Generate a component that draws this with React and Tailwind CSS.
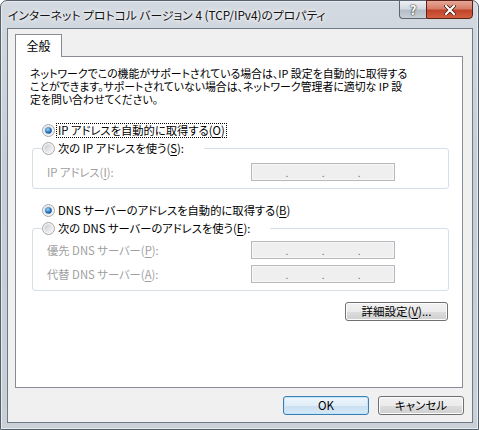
import React from "react";

const FONT = "font-['Noto_Sans_CJK_JP','Noto_Sans',sans-serif] [font-feature-settings:'palt']";

function Radio({ checked, id }) {
  return (
    <svg width="13" height="13" viewBox="0 0 13 13" className="shrink-0">
      <defs>
        <linearGradient id={`rf-${id}`} x1="0" y1="0" x2="1" y2="1">
          <stop offset="0" stopColor="#c9cdd1" />
          <stop offset="1" stopColor="#f7f7f7" />
        </linearGradient>
        <radialGradient id={`rd-${id}`} cx="0.4" cy="0.35" r="0.75">
          <stop offset="0" stopColor="#a6dcfb" />
          <stop offset="0.55" stopColor="#2a77c6" />
          <stop offset="1" stopColor="#15467f" />
        </radialGradient>
      </defs>
      <circle cx="6.5" cy="6.5" r="6" fill="#f3f3f3" stroke="#a4a8ac" />
      <circle cx="6.5" cy="6.5" r="4.2" fill={`url(#rf-${id})`} />
      {checked && <circle cx="6.5" cy="6.5" r="3.3" fill={`url(#rd-${id})`} />}
    </svg>
  );
}

function Key({ children }) {
  return <span className="underline underline-offset-[2px]">{children}</span>;
}

function RadioRow({ id, checked, focus, children }) {
  return (
    <div className="flex h-[16px] items-center">
      <Radio id={id} checked={checked} />
      <span
        className={
          "ml-[1px] px-[1px] leading-[13px] border whitespace-nowrap " +
          (focus ? "border-dotted border-black" : "border-transparent")
        }
      >
        {children}
      </span>
    </div>
  );
}

function IpField() {
  return (
    <div className="flex h-[18px] w-[144px] items-end border border-[#b5b9bd] bg-[#efefef] pb-[3px] text-[10px] leading-[8px] text-[#6d6d6d] shadow-[inset_0_0_0_1px_#f7f7f7]">
      <span className="flex-1" />
      <span>.</span>
      <span className="flex-1" />
      <span>.</span>
      <span className="flex-1" />
      <span>.</span>
      <span className="flex-1" />
    </div>
  );
}

function FieldRow({ label, className = "" }) {
  return (
    <div className={"flex items-center pl-[5px] " + className}>
      <span className="w-[204px] whitespace-nowrap text-[#a0a0a0]">{label}</span>
      <IpField />
    </div>
  );
}

function Button({ children, primary, className = "" }) {
  return (
    <button
      className={
        "flex h-[19px] items-center justify-center rounded-[3px] border text-[11.5px] leading-none text-black " +
        (primary
          ? "border-[#3c7fb1] bg-[linear-gradient(180deg,#eef6fc_0%,#e0eef8_50%,#c9e0f1_51%,#d6e8f5_100%)] shadow-[inset_0_0_0_1px_#bfe4fb] "
          : "border-[#707070] bg-[linear-gradient(180deg,#f2f2f2_0%,#ebebeb_50%,#dddddd_51%,#cfcfcf_100%)] shadow-[inset_0_0_0_1px_#fcfcfc] ") +
        className
      }
    >
      {children}
    </button>
  );
}

export default function App() {
  return (
    <div className={"w-[479px] h-[430px] bg-white " + FONT}>
      <div className="flex h-[430px] w-[479px] flex-col rounded-t-[7px] border border-[#57616c] bg-[linear-gradient(180deg,#d3d9e0_0%,#c5cdd6_40%,#c9d0d8_100%)] pb-[6px] pl-[6px] pr-[5px] shadow-[inset_0_0_0_1px_#e6ebf0]">
        {/* TITLE BAR */}
        <div className="flex h-[27px] shrink-0 items-start">
          <div className="self-center pl-[1px] text-[11.8px] leading-[14px] text-[#111] whitespace-nowrap [text-shadow:0_0_6px_#fff,0_0_3px_#fff]">
            インターネット プロトコル バージョン 4 (TCP/IPv4)のプロパティ
          </div>
          <div className="ml-auto -mt-[1px] flex">
            <div className="flex h-[19px] w-[27px] items-center justify-center rounded-bl-[4px] border border-r-0 border-[#5b6470] bg-[linear-gradient(180deg,#eef1f4_0%,#d4dae1_45%,#b4bdc7_55%,#c7cfd7_100%)] text-[13px] font-bold leading-none text-white [text-shadow:0_0_2px_#222,0_0_1px_#222]">
              ?
            </div>
            <div className="flex h-[19px] w-[47px] items-center justify-center rounded-br-[4px] border border-[#5a2217] bg-[linear-gradient(180deg,#e6a797_0%,#d77e69_45%,#c0432a_55%,#d4603f_100%)]">
              <svg width="12" height="10" viewBox="0 0 12 10">
                <path d="M2 1 L10 9 M10 1 L2 9" stroke="#3a1008" strokeWidth="3.6" strokeLinecap="square" />
                <path d="M2 1 L10 9 M10 1 L2 9" stroke="#fff" strokeWidth="2.2" strokeLinecap="square" />
              </svg>
            </div>
          </div>
        </div>

        {/* CLIENT */}
        <div className="flex h-[395px] flex-col border border-[#6f7a85] bg-[#f0f0f0] pl-[7px] pr-[9px] pt-[5px] text-[11.3px] text-black">
          <div className="relative z-10 -mb-[1px] flex h-[23px] w-[47px] items-center justify-center border border-b-0 border-[#898c95] bg-white text-[12px] leading-none">
            全般
          </div>
          <div className="h-[332px] border border-[#898c95] bg-white pl-[14px] pr-[13px]">
            <div className="mt-[10px] text-[10.9px]">
              <div className="h-[13px] leading-[13px] whitespace-nowrap">ネットワークでこの機能がサポートされている場合は、IP 設定を自動的に取得する</div>
              <div className="h-[13px] leading-[13px] whitespace-nowrap">ことができます。サポートされていない場合は、ネットワーク管理者に適切な IP 設</div>
              <div className="h-[13px] leading-[13px] whitespace-nowrap">定を問い合わせてください。</div>
            </div>

            <div className="mt-[16px] pl-[12px]">
              <RadioRow id="r1" checked focus>
                IP アドレスを自動的に取得する(<Key>O</Key>)
              </RadioRow>
            </div>
            <fieldset className="ml-[2px] mt-[2px] rounded-[3px] border border-[#d5dfe5] pb-[7px] pl-[9px] pt-[7px]">
              <legend className="pr-[18px]">
                <RadioRow id="r2">
                  次の IP アドレスを使う(<Key>S</Key>):
                </RadioRow>
              </legend>
              <FieldRow label={<>IP アドレス(<Key>I</Key>):</>} />
            </fieldset>

            <div className="mt-[13px] pl-[12px]">
              <RadioRow id="r3" checked>
                DNS サーバーのアドレスを自動的に取得する(<Key>B</Key>)
              </RadioRow>
            </div>
            <fieldset className="ml-[2px] mt-[2px] rounded-[3px] border border-[#d5dfe5] pb-[7px] pl-[9px] pt-[5px]">
              <legend className="pr-[18px]">
                <RadioRow id="r4">
                  次の DNS サーバーのアドレスを使う(<Key>E</Key>):
                </RadioRow>
              </legend>
              <FieldRow label={<>優先 DNS サーバー(<Key>P</Key>):</>} />
              <FieldRow className="mt-[6px]" label={<>代替 DNS サーバー(<Key>A</Key>):</>} />
            </fieldset>

            <div className="mt-[11px] flex justify-end pr-[1px]">
              <Button className="w-[103px]">
                詳細設定(<Key>V</Key>)...
              </Button>
            </div>
          </div>

          <div className="-mr-[1px] mt-[8px] flex justify-end gap-[9px]">
            <Button primary className="w-[86px]">OK</Button>
            <Button className="w-[86px]">キャンセル</Button>
          </div>
        </div>
      </div>
    </div>
  );
}
